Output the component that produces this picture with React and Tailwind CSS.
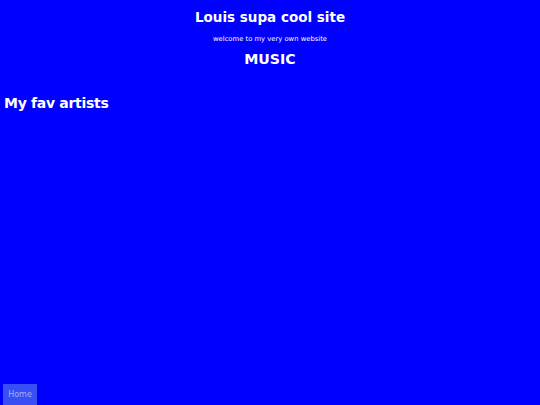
export default function App() {
  return (
    <div className="min-h-screen bg-[#0000ff] text-white flex flex-col" style={{ fontFamily: '"DejaVu Sans", Verdana, sans-serif' }}>
      <header className="text-center pt-[9px]">
        <h1 className="text-[13.5px] font-bold leading-[16px]">Louis supa cool site</h1>
        <p className="text-[6.8px] leading-[8px] mt-[10px]">welcome to my very own website</p>
        <h2 className="text-[14.2px] font-bold leading-[17px] mt-[8px]">MUSIC</h2>
      </header>
      <h2 className="text-[14px] font-bold leading-[16px] tracking-[-0.3px] mt-[27px] ml-[4px]">My fav artists</h2>
      <div className="mt-auto ml-[3px]">
        <button className="w-[34px] h-[21px] bg-[#3a4ef5] text-[#a0b2f5] text-[8px] leading-[21px]">Home</button>
      </div>
    </div>
  );
}
